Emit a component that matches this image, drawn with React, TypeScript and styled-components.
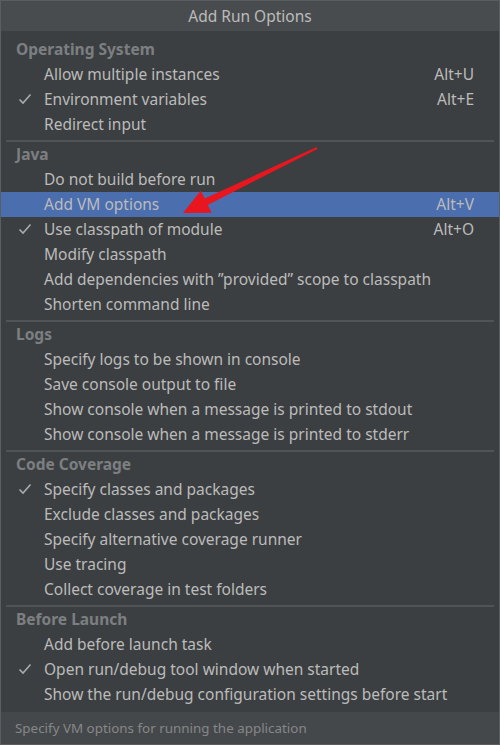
import React from "react";
import styled, { createGlobalStyle } from "styled-components";

const Global = createGlobalStyle`
  html, body { margin: 0; padding: 0; background: #3c3f41; }
  body { font-family: "Noto Sans", "Open Sans", sans-serif; }
`;

const Dialog = styled.div`
  position: relative;
  width: 500px;
  height: 745px;
  box-sizing: border-box;
  border: 1px solid #5b5e60;
  display: flex;
  flex-direction: column;
  background: #3c3f41;
  font-family: "Noto Sans", "Open Sans", sans-serif;
`;

const TitleBar = styled.div`
  height: 30px;
  flex: none;
  display: flex;
  align-items: center;
  justify-content: center;
  padding-bottom: 1px;
  box-sizing: border-box;
  background: #494c4e;
  color: #bbbbbb;
  font-size: 15.5px;
`;

const Body = styled.div`
  flex: 1;
  padding: 6px 0 5px;
  display: flex;
  flex-direction: column;
`;

const Header = styled.div`
  height: 25px;
  box-sizing: border-box;
  display: flex;
  align-items: center;
  padding: 0 0 2px 15px;
  color: #7c7f82;
  font-weight: 700;
  font-size: 15.5px;
`;

const Item = styled.div<{ $selected?: boolean }>`
  height: 25px;
  box-sizing: border-box;
  display: grid;
  grid-template-columns: 28px 1fr auto;
  align-items: center;
  padding: 0 25px 2px 15px;
  color: #bbbbbb;
  font-size: 15.5px;
  background: ${(p) => (p.$selected ? "#4b6eaf" : "transparent")};
`;

const Check = styled.span`
  display: flex;
  align-items: center;
  padding-left: 2px;
`;

const Shortcut = styled.span`
  color: #bbbbbb;
`;

const Separator = styled.div`
  height: 2px;
  margin: 3px 5px 0;
  background: #515456;
`;

const Footer = styled.div`
  height: 32px;
  flex: none;
  box-sizing: border-box;
  display: flex;
  align-items: center;
  padding: 0 0 1px 14px;
  background: #45484a;
  color: #858789;
  font-size: 13.4px;
`;

const Arrow = styled.svg`
  position: absolute;
  left: -1px;
  top: -1px;
  pointer-events: none;
`;

type Opt = { label: string; checked?: boolean; shortcut?: string; selected?: boolean };
type Sec = { title: string; items: Opt[] };

const sections: Sec[] = [
  {
    title: "Operating System",
    items: [
      { label: "Allow multiple instances", shortcut: "Alt+U" },
      { label: "Environment variables", checked: true, shortcut: "Alt+E" },
      { label: "Redirect input" },
    ],
  },
  {
    title: "Java",
    items: [
      { label: "Do not build before run" },
      { label: "Add VM options", shortcut: "Alt+V", selected: true },
      { label: "Use classpath of module", checked: true, shortcut: "Alt+O" },
      { label: "Modify classpath" },
      { label: "Add dependencies with \u201Dprovided\u201D scope to classpath" },
      { label: "Shorten command line" },
    ],
  },
  {
    title: "Logs",
    items: [
      { label: "Specify logs to be shown in console" },
      { label: "Save console output to file" },
      { label: "Show console when a message is printed to stdout" },
      { label: "Show console when a message is printed to stderr" },
    ],
  },
  {
    title: "Code Coverage",
    items: [
      { label: "Specify classes and packages", checked: true },
      { label: "Exclude classes and packages" },
      { label: "Specify alternative coverage runner" },
      { label: "Use tracing" },
      { label: "Collect coverage in test folders" },
    ],
  },
  {
    title: "Before Launch",
    items: [
      { label: "Add before launch task" },
      { label: "Open run/debug tool window when started", checked: true },
      { label: "Show the run/debug configuration settings before start" },
    ],
  },
];

const CheckIcon = () => (
  <svg width="14" height="12" viewBox="0 0 14 12">
    <polyline points="1.5,6.5 5,10 12.5,1.5" fill="none" stroke="#a9abad" strokeWidth="1.6" />
  </svg>
);

export default function App() {
  return (
    <>
      <Global />
      <Dialog>
        <TitleBar>Add Run Options</TitleBar>
        <Body>
          {sections.map((s, i) => (
            <React.Fragment key={s.title}>
              {i > 0 && <Separator />}
              <Header>{s.title}</Header>
              {s.items.map((it) => (
                <Item key={it.label} $selected={it.selected}>
                  <Check>{it.checked ? <CheckIcon /> : null}</Check>
                  <span>{it.label}</span>
                  <Shortcut>{it.shortcut ?? ""}</Shortcut>
                </Item>
              ))}
            </React.Fragment>
          ))}
        </Body>
        <Footer>Specify VM options for running the application</Footer>
        <Arrow width="500" height="745" viewBox="0 0 500 745">
          <polygon
            points="183,213 200.7,190.7 204.7,198.5 316.6,147.1 317.4,148.9 207.7,204.9 211.7,212.7"
            fill="#e8161e"
          />
        </Arrow>
      </Dialog>
    </>
  );
}
